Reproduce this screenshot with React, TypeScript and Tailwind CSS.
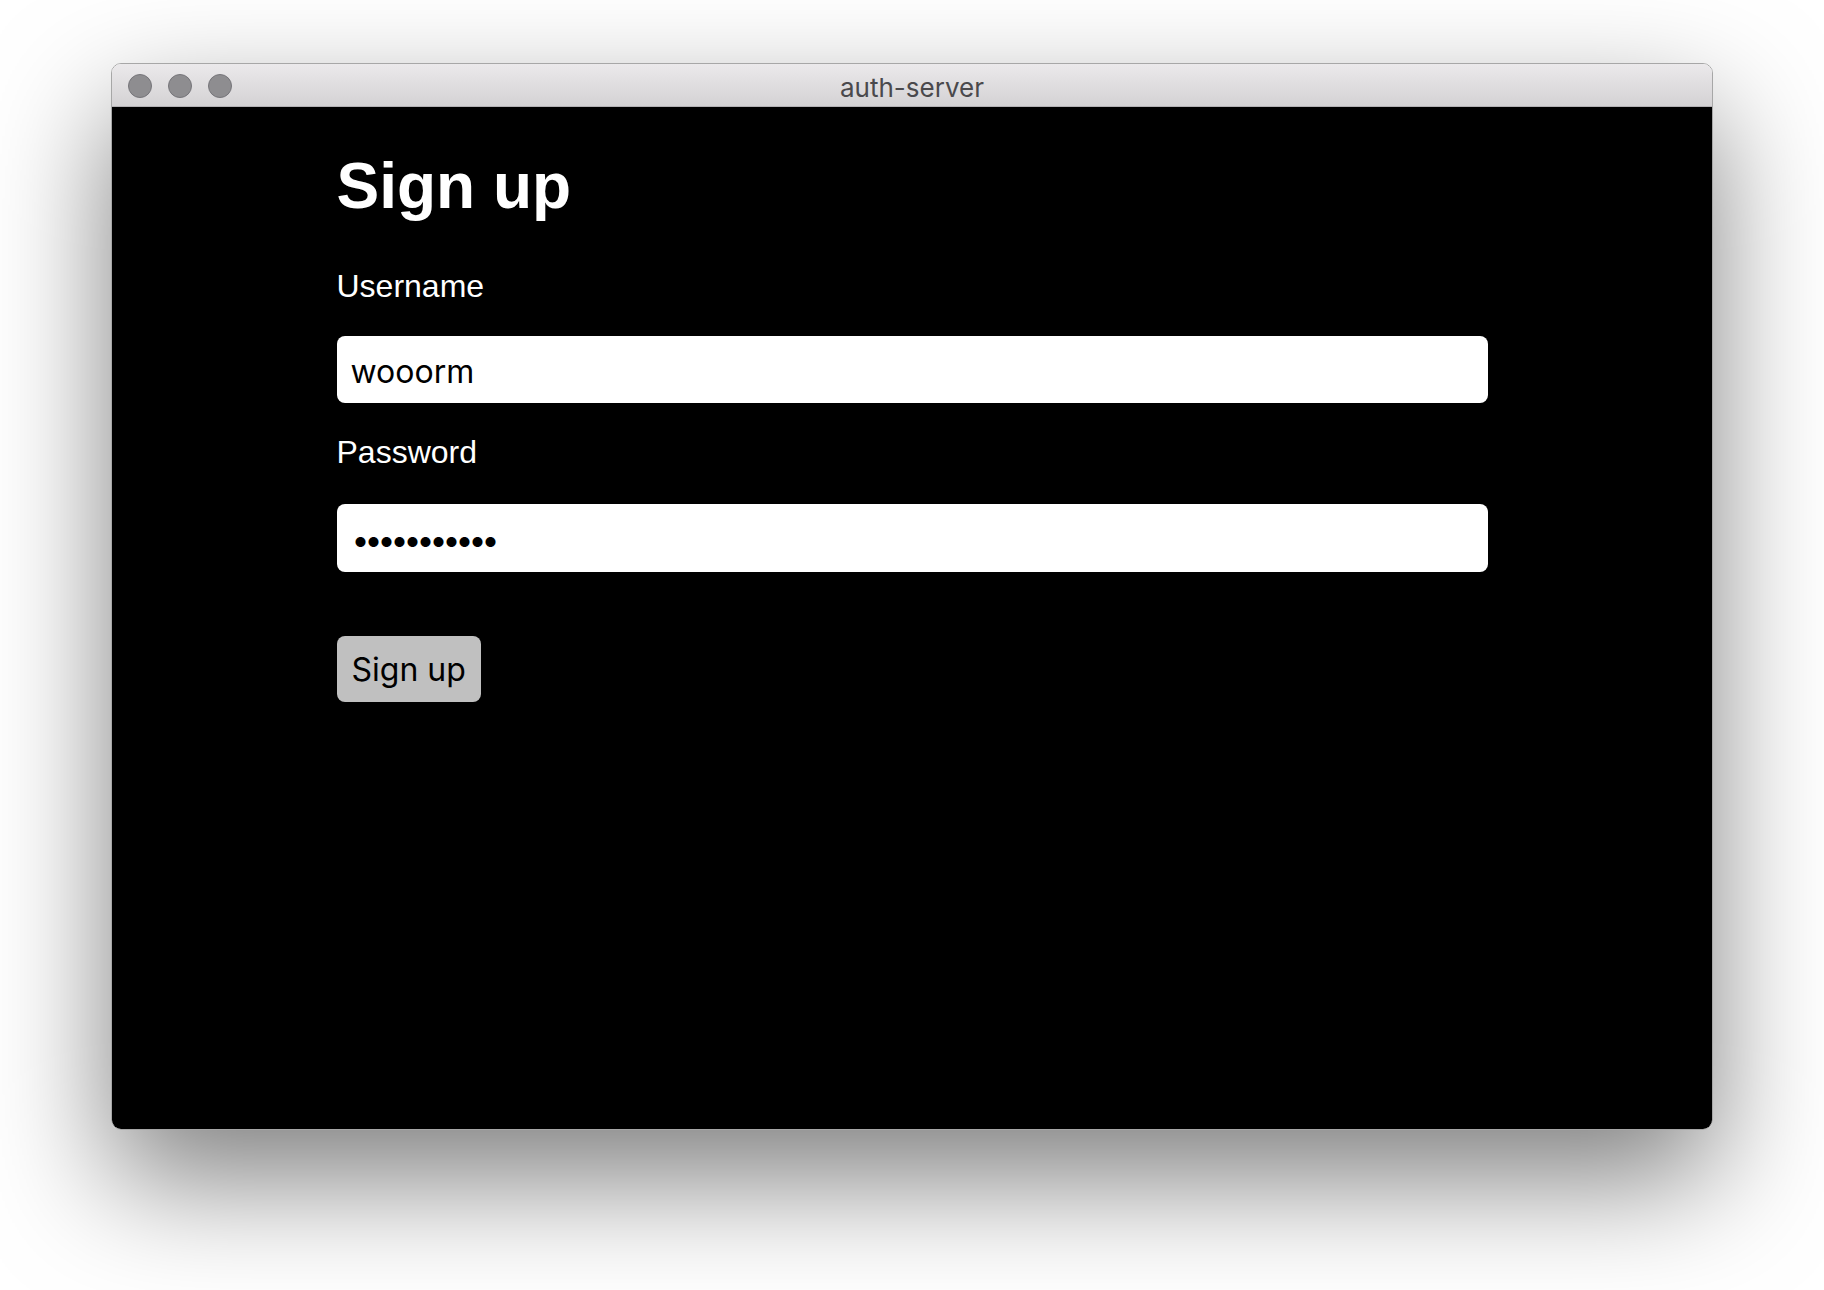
import { useState } from "react";

const TrafficLight: React.FC = () => (
    <span className="block size-[24px] rounded-full bg-[#8e8d90] border border-[#76757a]" />
);

const TitleBar: React.FC<{ title: string }> = ({ title }) => {
    return (
        <div className="relative flex items-center h-[43px] border-b border-[#b3b1b4] bg-gradient-to-b from-[#ebe9eb] to-[#d4d2d4]">
            <div className="flex items-center gap-[16px] pl-[16px] pt-[1px]">
                <TrafficLight />
                <TrafficLight />
                <TrafficLight />
            </div>
            <p className="absolute inset-x-0 top-[2px] text-center text-[26px] leading-[43px] text-[#4a494c] font-['Inter',sans-serif] pointer-events-none">
                {title}
            </p>
        </div>
    );
};

const SignUpForm: React.FC = () => {
    const [formData, setFormData] = useState({
        username: "wooorm",
        password: "hunter2hunt",
    });

    const handleChange = (e: React.ChangeEvent<HTMLInputElement>) => {
        const { name, value } = e.target;
        setFormData((prev) => ({ ...prev, [name]: value }));
    };

    return (
        <form className="flex flex-col w-[1151px] mx-auto" onSubmit={(e) => e.preventDefault()}>
            <h1 className="mt-[43px] text-[64px] leading-[72px] font-bold text-white font-['Liberation_Sans',Arial,sans-serif]">
                Sign up
            </h1>

            <label
                htmlFor="username"
                className="mt-[46px] mb-[32px] text-[32px] leading-[36px] text-white font-['Liberation_Sans',Arial,sans-serif]"
            >
                Username
            </label>
            <input
                id="username"
                name="username"
                value={formData.username}
                onChange={handleChange}
                className="h-[67px] px-[14px] pt-[3px] text-[32px] text-black bg-white rounded-[8px] outline-none font-['Inter',sans-serif]"
            />

            <label
                htmlFor="password"
                className="mt-[31px] mb-[34px] text-[32px] leading-[36px] text-white font-['Liberation_Sans',Arial,sans-serif]"
            >
                Password
            </label>
            <input
                id="password"
                name="password"
                type="password"
                value={formData.password}
                onChange={handleChange}
                className="h-[68px] px-[15px] pt-[3px] text-[32px] tracking-[-5px] text-black bg-white rounded-[8px] outline-none font-['Inter',sans-serif]"
            />

            <button
                type="submit"
                className="mt-[64px] w-fit h-[66px] px-[15px] pt-[2px] text-[32px] text-black bg-[#c0c0c0] rounded-[8px] font-['Inter',sans-serif]"
            >
                Sign up
            </button>
        </form>
    );
};

export default function App() {
    return (
        <div className="flex justify-center h-[1290px] pt-[63px] bg-white">
            <div className="flex flex-col w-[1602px] h-[1067px] rounded-[10px] overflow-hidden border border-[#a7a7a7] shadow-[0_50px_120px_0_rgba(0,0,0,0.5)]">
                <TitleBar title="auth-server" />
                <div className="flex-1 bg-black">
                    <SignUpForm />
                </div>
            </div>
        </div>
    );
}
